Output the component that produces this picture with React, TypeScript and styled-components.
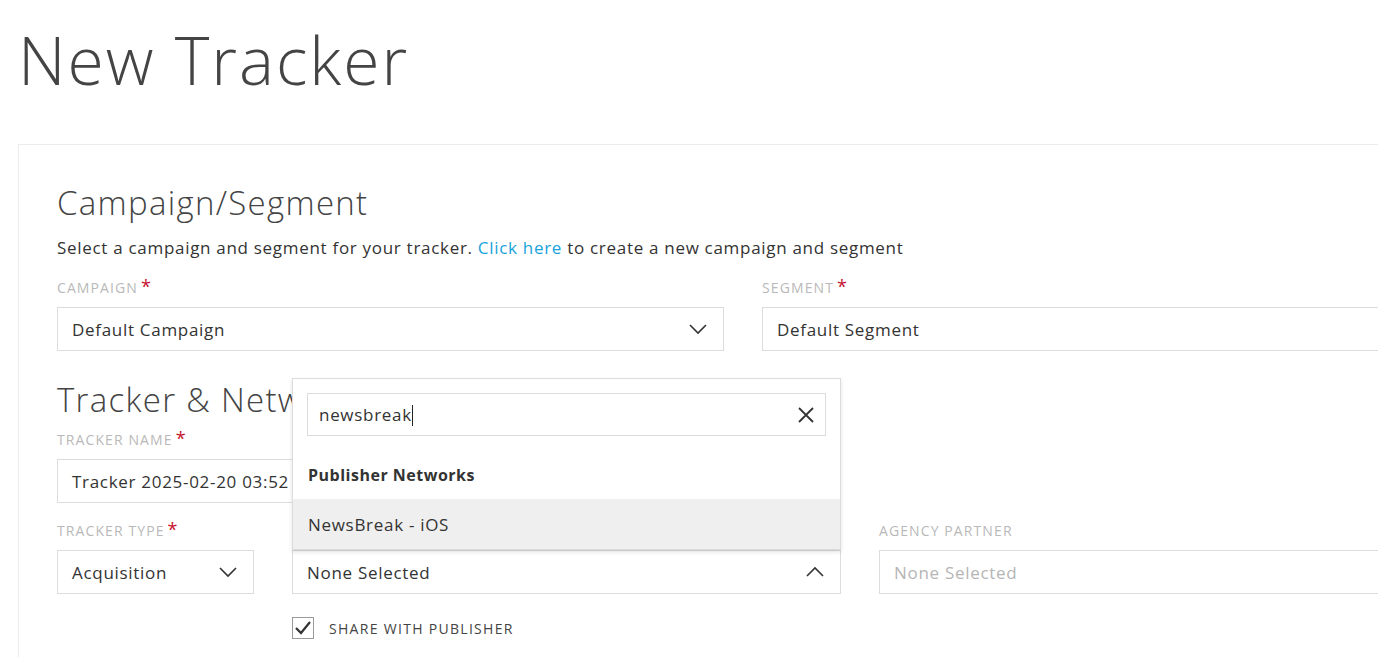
import React from "react";
import styled, { createGlobalStyle } from "styled-components";

const GlobalStyle = createGlobalStyle`
  html, body {
    margin: 0;
    padding: 0;
    background: #fff;
    overflow: hidden;
  }
  body {
    font-family: "Open Sans", "Liberation Sans", sans-serif;
    color: #333;
  }
`;

const Page = styled.div`
  width: 1378px;
  height: 657px;
  overflow: hidden;
  padding: 19px 0 0 18px;
  box-sizing: border-box;
`;

const Title = styled.h1`
  margin: 0 0 45px 0;
  font-weight: 300;
  font-size: 66px;
  line-height: 80px;
  color: #444;
  letter-spacing: 2px;
`;

const Card = styled.section`
  width: 1460px;
  border: 1px solid #ececec;
  padding: 38px 38px 40px 38px;
  box-sizing: border-box;
`;

const SectionTitle = styled.h2<{ $mt?: number }>`
  margin: ${(p) => p.$mt ?? 0}px 0 0 0;
  font-weight: 300;
  font-size: 33px;
  line-height: 40px;
  color: #444;
  letter-spacing: 1.3px;
  white-space: nowrap;
`;

const Description = styled.p`
  margin: 14px 0 19px;
  font-size: 17px;
  line-height: 22px;
  letter-spacing: 0.7px;
  color: #333;
`;

const Link = styled.a`
  color: #17a3dc;
  text-decoration: none;
`;

const Row = styled.div<{ $cols: string; $mt?: number }>`
  display: grid;
  grid-template-columns: ${(p) => p.$cols};
  column-gap: 38px;
  margin-top: ${(p) => p.$mt ?? 0}px;
`;

const Field = styled.div`
  display: flex;
  flex-direction: column;
`;

const Label = styled.label`
  font-size: 14px;
  line-height: 20px;
  letter-spacing: 1.1px;
  color: #b9b9b9;
  text-transform: uppercase;
  height: 20px;
  margin-bottom: 9px;
  display: flex;
  align-items: flex-start;
  white-space: nowrap;
`;

const Req = styled.span`
  color: #c8102e;
  font-size: 18px;
  line-height: 16px;
  margin-left: 3px;
  letter-spacing: 0;
`;

const SelectWrap = styled.div`
  position: relative;
`;

const Box = styled.div<{ $muted?: boolean }>`
  height: 44px;
  border: 1px solid #dcdcdc;
  box-sizing: border-box;
  padding: 0 14px;
  display: flex;
  align-items: center;
  justify-content: space-between;
  font-size: 17px;
  letter-spacing: 0.7px;
  color: ${(p) => (p.$muted ? "#b5b5b5" : "#333")};
  background: #fff;
  white-space: nowrap;
  overflow: hidden;
`;

const Chevron = styled.svg`
  width: 18px;
  height: 18px;
  flex: none;
  margin-right: 2px;
`;

const Dropdown = styled.div`
  position: absolute;
  left: 0;
  right: 0;
  bottom: 100%;
  background: #fff;
  border: 1px solid #dcdcdc;
  box-shadow: 0 2px 4px rgba(0, 0, 0, 0.12);
  padding-top: 14px;
  z-index: 5;
`;

const Search = styled.div`
  margin: 0 14px;
  height: 43px;
  border: 1px solid #dcdcdc;
  box-sizing: border-box;
  display: flex;
  align-items: center;
  justify-content: space-between;
  padding: 0 10px 0 11px;
  font-size: 17px;
  letter-spacing: 0.7px;
  color: #333;
`;

const Caret = styled.span`
  display: inline-block;
  width: 1px;
  height: 21px;
  background: #222;
  vertical-align: middle;
`;

const GroupTitle = styled.div`
  font-weight: 700;
  font-size: 16px;
  line-height: 22px;
  letter-spacing: 0.5px;
  color: #333;
  padding: 28px 15px 13px;
`;

const Option = styled.div<{ $active?: boolean }>`
  height: 50px;
  padding: 0 15px;
  display: flex;
  align-items: center;
  font-size: 17px;
  letter-spacing: 0.7px;
  color: #333;
  background: ${(p) => (p.$active ? "#efefef" : "#fff")};
`;

const CheckRow = styled.div`
  display: flex;
  align-items: center;
  gap: 15px;
  margin-top: 23px;
  font-size: 14px;
  letter-spacing: 1.3px;
  color: #444;
  white-space: nowrap;
`;

const CheckBox = styled.span`
  width: 22px;
  height: 22px;
  border: 1px solid #9a9a9a;
  box-sizing: border-box;
  display: flex;
  align-items: center;
  justify-content: center;
`;

const Down = () => (
  <Chevron viewBox="0 0 18 18">
    <polyline points="1,5 9,13 17,5" fill="none" stroke="#333" strokeWidth="1.6" />
  </Chevron>
);

const Up = () => (
  <Chevron viewBox="0 0 18 18">
    <polyline points="1,13 9,5 17,13" fill="none" stroke="#333" strokeWidth="1.6" />
  </Chevron>
);

const Close = () => (
  <svg width="18" height="18" viewBox="0 0 18 18">
    <path d="M2 2 L16 16 M16 2 L2 16" stroke="#333" strokeWidth="1.8" fill="none" />
  </svg>
);

export default function App() {
  return (
    <>
      <GlobalStyle />
      <Page>
        <Title>New Tracker</Title>
        <Card>
          <SectionTitle>Campaign/Segment</SectionTitle>
          <Description>
            Select a campaign and segment for your tracker. <Link>Click here</Link> to create a new
            campaign and segment
          </Description>
          <Row $cols="667px 667px">
            <Field>
              <Label>
                Campaign<Req>*</Req>
              </Label>
              <Box>
                Default Campaign
                <Down />
              </Box>
            </Field>
            <Field>
              <Label>
                Segment<Req>*</Req>
              </Label>
              <Box>Default Segment</Box>
            </Field>
          </Row>

          <SectionTitle $mt={29}>Tracker &amp; Network</SectionTitle>
          <Row $cols="667px" $mt={10}>
            <Field>
              <Label>
                Tracker Name<Req>*</Req>
              </Label>
              <Box>Tracker 2025-02-20 03:52</Box>
            </Field>
          </Row>
          <Row $cols="197px 549px 549px" $mt={18}>
            <Field>
              <Label>
                Tracker Type<Req>*</Req>
              </Label>
              <Box>
                Acquisition
                <Down />
              </Box>
            </Field>
            <Field>
              <Label>
                Network<Req>*</Req>
              </Label>
              <SelectWrap>
                <Box>
                  None Selected
                  <Up />
                </Box>
                <Dropdown>
                  <Search>
                    <span>
                      newsbreak
                      <Caret />
                    </span>
                    <Close />
                  </Search>
                  <GroupTitle>Publisher Networks</GroupTitle>
                  <Option $active>NewsBreak - iOS</Option>
                </Dropdown>
              </SelectWrap>
              <CheckRow>
                <CheckBox>
                  <svg width="18" height="18" viewBox="0 0 18 18">
                    <polyline
                      points="2,9 7,14 16,3"
                      fill="none"
                      stroke="#333"
                      strokeWidth="2.2"
                    />
                  </svg>
                </CheckBox>
                SHARE WITH PUBLISHER
              </CheckRow>
            </Field>
            <Field>
              <Label>Agency Partner</Label>
              <Box $muted>None Selected</Box>
            </Field>
          </Row>
        </Card>
      </Page>
    </>
  );
}
